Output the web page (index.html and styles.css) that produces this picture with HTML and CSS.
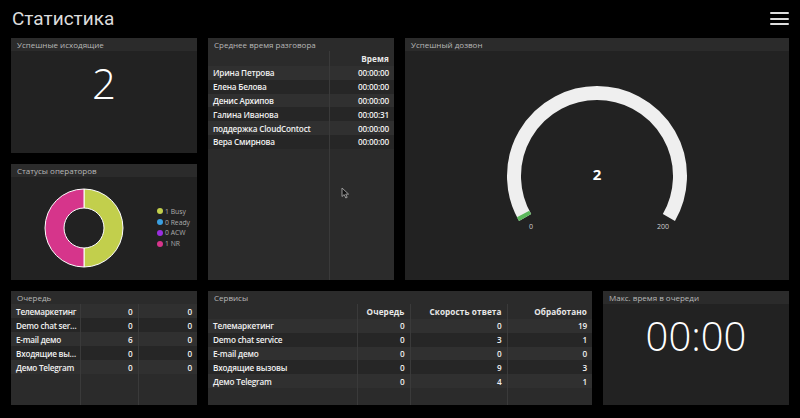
FILE: index.html
```html
<!DOCTYPE html>
<html lang="ru">
<head>
<meta charset="utf-8">
<title>Статистика</title>
<link rel="stylesheet" href="styles.css">
</head>
<body>
<header class="topbar">
  <h1 class="title">Статистика</h1>
  <div class="burger"><span></span><span></span><span></span></div>
</header>

<section class="grid-top">
  <div class="card c-out">
    <div class="card-head">Успешные исходящие</div>
    <div class="card-body big-body"><div class="big">2</div></div>
  </div>

  <div class="card c-status">
    <div class="card-head">Статусы операторов</div>
    <div class="card-body status-body">
      <svg class="donut" width="80" height="80" viewBox="0 0 80 80">
        <path d="M40 1 A39 39 0 0 1 40 79 L40 60 A20 20 0 0 0 40 20 Z" fill="#c2cf4c" stroke="#ffffff" stroke-width="1"/>
        <path d="M40 79 A39 39 0 0 1 40 1 L40 20 A20 20 0 0 0 40 60 Z" fill="#d6358b" stroke="#ffffff" stroke-width="1"/>
      </svg>
      <ul class="legend">
        <li><i class="dot d-busy"></i>1 Busy</li>
        <li><i class="dot d-ready"></i>0 Ready</li>
        <li><i class="dot d-acw"></i>0 ACW</li>
        <li><i class="dot d-nr"></i>1 NR</li>
      </ul>
    </div>
  </div>

  <div class="card c-avg">
    <div class="card-head">Среднее время разговора</div>
    <div class="card-body tbl-body">
      <table class="tbl">
        <colgroup><col class="w-avg1"><col></colgroup>
        <thead><tr><th></th><th>Время</th></tr></thead>
        <tbody>
          <tr class="row"><td>Ирина Петрова</td><td class="num">00:00:00</td></tr>
          <tr class="row"><td>Елена Белова</td><td class="num">00:00:00</td></tr>
          <tr class="row"><td>Денис Архипов</td><td class="num">00:00:00</td></tr>
          <tr class="row"><td>Галина Иванова</td><td class="num">00:00:31</td></tr>
          <tr class="row"><td>поддержка CloudContoct</td><td class="num">00:00:00</td></tr>
          <tr class="row"><td>Вера Смирнова</td><td class="num">00:00:00</td></tr>
          <tr class="fill"><td></td><td></td></tr>
        </tbody>
      </table>
      <svg class="cursor" width="9" height="12" viewBox="0 0 9 12"><path d="M1 1 L1 9.5 L3.2 7.6 L4.8 11 L6.2 10.3 L4.7 7.1 L7.6 7.1 Z" fill="#111" stroke="#9a9a9a" stroke-width="1"/></svg>
    </div>
  </div>

  <div class="card c-gauge">
    <div class="card-head">Успешный дозвон</div>
    <div class="card-body gauge-body">
      <svg class="gauge" width="384" height="229" viewBox="0 0 384 229">
        <path d="M120.1 166.5 A83 83 0 1 1 263.9 166.5" fill="none" stroke="#efefef" stroke-width="14"/>
        <path d="M120.1 166.5 A83 83 0 0 1 118.1 162.9" fill="none" stroke="#5cb85c" stroke-width="14"/>
        <text x="192" y="125" class="g-val" text-anchor="middle">2</text>
        <text x="126" y="178" class="g-lbl" text-anchor="middle">0</text>
        <text x="258" y="178" class="g-lbl" text-anchor="middle">200</text>
      </svg>
    </div>
  </div>
</section>

<section class="grid-bottom">
  <div class="card c-queue">
    <div class="card-head">Очередь</div>
    <div class="card-body tbl-body">
      <table class="tbl tbl-queue">
        <colgroup><col class="w-q1"><col class="w-q2"><col></colgroup>
        <tbody>
          <tr class="row"><td>Телемаркетинг</td><td class="num">0</td><td class="num">0</td></tr>
          <tr class="row"><td>Demo chat service</td><td class="num">0</td><td class="num">0</td></tr>
          <tr class="row"><td>E-mail демо</td><td class="num">6</td><td class="num">0</td></tr>
          <tr class="row"><td>Входящие вызовы</td><td class="num">0</td><td class="num">0</td></tr>
          <tr class="row"><td>Демо Telegram</td><td class="num">0</td><td class="num">0</td></tr>
          <tr class="fill"><td></td><td></td><td></td></tr>
        </tbody>
      </table>
    </div>
  </div>

  <div class="card c-serv">
    <div class="card-head">Сервисы</div>
    <div class="card-body tbl-body">
      <table class="tbl">
        <colgroup><col class="w-s1"><col class="w-s2"><col class="w-s3"><col></colgroup>
        <thead><tr><th></th><th>Очередь</th><th>Скорость ответа</th><th>Обработано</th></tr></thead>
        <tbody>
          <tr class="row"><td>Телемаркетинг</td><td class="num">0</td><td class="num">0</td><td class="num">19</td></tr>
          <tr class="row"><td>Demo chat service</td><td class="num">0</td><td class="num">3</td><td class="num">1</td></tr>
          <tr class="row"><td>E-mail демо</td><td class="num">0</td><td class="num">0</td><td class="num">0</td></tr>
          <tr class="row"><td>Входящие вызовы</td><td class="num">0</td><td class="num">9</td><td class="num">3</td></tr>
          <tr class="row"><td>Демо Telegram</td><td class="num">0</td><td class="num">4</td><td class="num">1</td></tr>
          <tr class="fill"><td></td><td></td><td></td><td></td></tr>
        </tbody>
      </table>
    </div>
  </div>

  <div class="card c-max">
    <div class="card-head">Макс. время в очереди</div>
    <div class="card-body big-body"><div class="big big-time">00:00</div></div>
  </div>
</section>
</body>
</html>
```

FILE: styles.css
```css
* { box-sizing: border-box; }
html, body { margin: 0; padding: 0; }
body {
  width: 800px;
  height: 418px;
  background: #000;
  font-family: "Open Sans", "DejaVu Sans", sans-serif;
  color: #eee;
  overflow: hidden;
}

.topbar {
  height: 38px;
  display: flex;
  align-items: center;
  justify-content: space-between;
  padding: 0 11px 0 12px;
}
.title {
  margin: 0;
  font-family: Roboto, "Open Sans", sans-serif;
  font-size: 19px;
  font-weight: 400;
  color: #dcdcdc;
  line-height: 1;
  padding-bottom: 1px;
}
.burger {
  display: flex;
  flex-direction: column;
  gap: 3.5px;
  width: 19px;
  margin-bottom: 1px;
}
.burger span {
  display: block;
  height: 2px;
  background: #dedede;
  border-radius: 1px;
}

.grid-top {
  display: grid;
  grid-template-columns: 186px 186px 384px;
  grid-template-rows: 115px 116px;
  gap: 11px;
  padding: 0 11px;
  height: 242px;
}
.grid-bottom {
  display: grid;
  grid-template-columns: 186px 384px 186px;
  gap: 11px;
  padding: 0 11px;
  margin-top: 11px;
  height: 114px;
}

.c-out { grid-column: 1; grid-row: 1; }
.c-status { grid-column: 1; grid-row: 2; }
.c-avg { grid-column: 2; grid-row: 1 / 3; }
.c-gauge { grid-column: 3; grid-row: 1 / 3; }

.card {
  display: flex;
  flex-direction: column;
  background: #222;
  overflow: hidden;
  position: relative;
}
.card-head {
  height: 13px;
  flex: none;
  background: #2b2b2b;
  color: #b8b8b8;
  font-size: 8px;
  line-height: 13px;
  padding-left: 6px;
  white-space: nowrap;
}
.card-body {
  flex: 1;
  min-height: 0;
  position: relative;
}

.big-body {
  display: flex;
  justify-content: center;
  padding-top: 11px;
}
.big {
  font-size: 42px;
  line-height: 42px;
  font-weight: 300;
  color: #fff;
}
.c-max .big-body { padding-top: 12px; }
.big-time { font-size: 40px; line-height: 40px; }

.status-body {
  display: flex;
  align-items: center;
  padding-left: 33px;
  padding-bottom: 2px;
}
.donut { flex: none; display: block; }
.legend {
  list-style: none;
  margin: 0 0 0 33px;
  padding: 0;
  font-size: 6.8px;
  color: #ababab;
}
.legend li {
  display: flex;
  align-items: center;
  height: 10.7px;
}
.dot {
  display: inline-block;
  width: 6px;
  height: 6px;
  border-radius: 50%;
  margin-right: 2px;
}
.d-busy { background: #c2cf4c; }
.d-ready { background: #3a9fe0; }
.d-acw { background: #9a2fe0; }
.d-nr { background: #d6358b; }

.tbl-body { background: #2b2b2b; }
.tbl {
  width: 100%;
  height: 100%;
  border-collapse: collapse;
  table-layout: fixed;
  font-size: 8.2px;
  font-weight: 600;
  letter-spacing: -0.2px;
  color: #f0f0f0;
}
.tbl th, .tbl td {
  padding: 0 5px;
  white-space: nowrap;
  overflow: hidden;
  text-overflow: ellipsis;
  border-left: 1px solid #3a3a3a;
  text-align: left;
}
.tbl th:first-child, .tbl td:first-child { border-left: none; }
.tbl thead tr { height: 15px; }
.tbl th { text-align: right; font-weight: 700; color: #e8e8e8; letter-spacing: 0.1px; }
.tbl .row { height: 13.8px; }
.tbl .row:nth-child(odd) { background: #303030; }
.tbl .row:nth-child(even) { background: #262626; }
.tbl .num { text-align: right; }
.tbl .fill td { height: auto; }
.tbl-queue td:first-child { padding-right: 1px; letter-spacing: -0.25px; }
.tbl-queue .row { height: 14px; }

.w-avg1 { width: 121px; }
.w-q1 { width: 69px; }
.w-q2 { width: 58px; }
.w-s1 { width: 149px; }
.w-s2 { width: 53px; }
.w-s3 { width: 97px; }

.cursor { position: absolute; left: 133px; top: 136px; }

.gauge-body { overflow: hidden; }
.gauge { display: block; }
.g-val { font-family: "Open Sans", sans-serif; font-size: 15px; font-weight: 700; fill: #fff; dominant-baseline: middle; }
.g-lbl { font-family: "Open Sans", sans-serif; font-size: 7px; fill: #d0d0d0; }
```
